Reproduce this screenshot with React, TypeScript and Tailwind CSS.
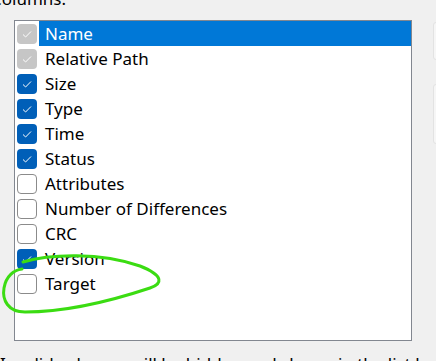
import React from "react";

type Item = { label: string; state: "disabled" | "checked" | "unchecked"; selected?: boolean };

const items: Item[] = [
  { label: "Name", state: "disabled", selected: true },
  { label: "Relative Path", state: "disabled" },
  { label: "Size", state: "checked" },
  { label: "Type", state: "checked" },
  { label: "Time", state: "checked" },
  { label: "Status", state: "checked" },
  { label: "Attributes", state: "unchecked" },
  { label: "Number of Differences", state: "unchecked" },
  { label: "CRC", state: "unchecked" },
  { label: "Version", state: "checked" },
  { label: "Target", state: "unchecked" },
];

function Check({ state }: { state: Item["state"] }) {
  if (state === "unchecked") {
    return <div className="w-[20px] h-[20px] shrink-0 rounded-[4px] border border-[#8b8b8b] bg-white" />;
  }
  const bg = state === "disabled" ? "bg-[#c6c6c6]" : "bg-[#005fb8]";
  return (
    <div className={`w-[20px] h-[20px] shrink-0 rounded-[4px] ${bg} flex items-center justify-center`}>
      <svg width="20" height="20" viewBox="0 0 20 20">
        <path d="M6 10.5 L8.6 13 L14 7.5" fill="none" stroke="white" strokeWidth="1" />
      </svg>
    </div>
  );
}

export default function App() {
  return (
    <div
      className="relative w-[436px] h-[361px] overflow-hidden bg-[#f0f0f0] text-[17px] text-black"
      style={{ fontFamily: '"Noto Sans", sans-serif' }}
    >
      <div className="h-[20px] -mt-[11px] ml-[-9px] leading-[20px]">Columns:</div>
      <div className="flex mt-[11px] w-[436px] overflow-hidden">
        <div className="ml-[14px] w-[398px] h-[321px] shrink-0 border border-[#828790] bg-white pl-[2px]">
          {items.map((it) => (
            <div key={it.label} className="h-[25px] flex items-center">
              <Check state={it.state} />
              <div
                className={`ml-[2px] h-[25px] flex-1 pl-[6px] leading-[25px] ${
                  it.selected ? "bg-[#0078d7] text-white" : ""
                }`}
              >
                {it.label}
              </div>
            </div>
          ))}
        </div>
        <div className="ml-[21px] shrink-0 flex flex-col gap-[24px] mt-[2px]">
          <div className="w-[12px] h-[38px] rounded-[3px] border border-[#e3e3e3] bg-[#f6f6f6]" />
          <div className="w-[12px] h-[60px] rounded-[3px] border border-[#e3e3e3] bg-[#f6f6f6]" />
        </div>
      </div>
      <div className="mt-[13px] ml-[0px] leading-[20px] whitespace-nowrap">
        Invalid columns will be hidden and shown in the list below.
      </div>
      <svg className="absolute left-0 top-0 pointer-events-none" width="436" height="361">
        <path
          d="M23 262 C 50 254, 100 252, 140 266 C 165 276, 162 284, 150 288 C 120 298, 70 312, 25 312 C 8 312, 2 300, 4 288 C 6 276, 14 270, 22 269"
          fill="none"
          stroke="#3bdc12"
          strokeWidth="3"
          strokeLinecap="round"
        />
      </svg>
    </div>
  );
}
